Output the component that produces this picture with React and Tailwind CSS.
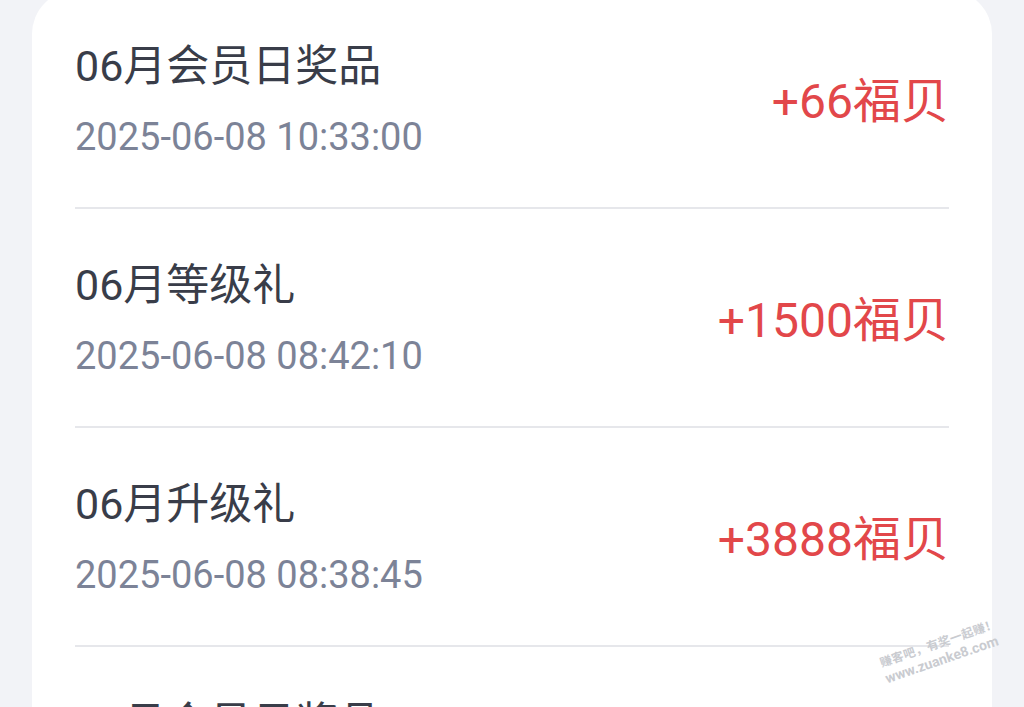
import React from "react";

const records = [
  { title: "06月会员日奖品", time: "2025-06-08 10:33:00", amount: "+66福贝" },
  { title: "06月等级礼", time: "2025-06-08 08:42:10", amount: "+1500福贝" },
  { title: "06月升级礼", time: "2025-06-08 08:38:45", amount: "+3888福贝" },
  { title: "05月会员日奖品", time: "2025-05-08 10:21:36", amount: "+66福贝" },
];

export default function App() {
  return (
    <div
      className="relative h-[707px] overflow-hidden bg-[#f2f3f7]"
      style={{ fontFamily: 'Roboto, "Noto Sans CJK SC", sans-serif' }}
    >
      <div className="mx-[32px] -mt-[10px] rounded-[44px] bg-white px-[43px]">
        {records.map((r, i) => (
          <div
            key={i}
            className={`flex items-center justify-between pt-[44px] pb-[38px] ${
              i < records.length - 1 ? "border-b-2 border-[#e6e7eb]" : ""
            }`}
          >
            <div className="flex flex-col gap-[7px]">
              <span className="text-[43px] leading-[64px] text-[#393d49]">
                {r.title}
              </span>
              <span className="text-[38px] leading-[64px] text-[#7c8397]">
                {r.time}
              </span>
            </div>
            <span className="text-[48px] leading-none text-[#e2474a]">
              {r.amount}
            </span>
          </div>
        ))}
      </div>

      {/* watermark */}
      <div className="absolute left-[880px] top-[636px] -rotate-[19deg] text-[#c9cbd0] leading-tight">
        <div className="text-[12px] font-bold tracking-wide">赚客吧，有奖一起赚！</div>
        <div className="text-[14px] font-bold">www.zuanke8.com</div>
      </div>
    </div>
  );
}
